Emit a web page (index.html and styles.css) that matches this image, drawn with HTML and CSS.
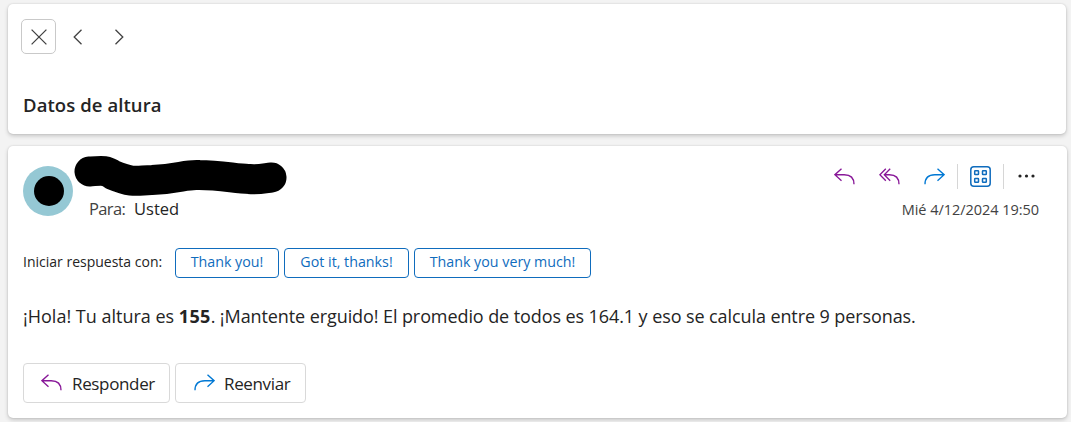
FILE: index.html
```
<!DOCTYPE html>
<html lang="es">
<head>
<meta charset="utf-8">
<title>Datos de altura</title>
<link rel="stylesheet" href="styles.css">
</head>
<body>
<header class="card subject-card">
  <nav class="nav">
    <button class="nav-btn close" aria-label="Cerrar"><svg width="16" height="16" viewBox="0 0 16 16"><path d="M.6.6 15.4 15.4M15.4.6.6 15.4"/></svg></button>
    <button class="nav-btn prev" aria-label="Anterior"><svg width="9" height="16" viewBox="0 0 9 16"><path d="M8.5.8 1.2 8l7.3 7.2"/></svg></button>
    <button class="nav-btn next" aria-label="Siguiente"><svg width="9" height="16" viewBox="0 0 9 16"><path d="M.5.8 7.8 8 .5 15.2"/></svg></button>
  </nav>
  <h1 class="subject"><span>Datos de altura</span></h1>
</header>
<main class="card message">
  <section class="message-head">
    <div class="avatar"><span class="avatar-dot"></span></div>
    <div class="sender">
      <svg class="redaction" width="214" height="41" viewBox="0 0 214 41"><path d="M15.500 16.500C29 15.500 32 15 39 20C61 29 64 25 78 25C104 24 112 19 125 20C148 20 162 24 175 24C185 25 192 23 197.500 22.500"/></svg>
      <p class="to"><span class="to-label">Para:</span><span class="to-name">Usted</span></p>
    </div>
    <div class="meta">
      <div class="actions">
        <svg class="ico purple first-action" width="21" height="17" viewBox="0 0 21 17"><path d="M7.500.8.9 6.700l6.600 6M1 6.700h9.200Q20 6.700 20 16.300"/></svg>
        <svg class="ico purple all" width="21" height="17" viewBox="0 0 21 17"><path d="M6.800.8.9 6.700l5.900 6M11.200.8 5.300 6.700l5.900 6M5.400 6.700h5Q20 6.700 20 16.300"/></svg>
        <svg class="ico blue fwd" width="21" height="17" viewBox="0 0 21 17"><path d="M13.500.8l6.600 5.900-6.600 6M20 6.700h-9.200Q1 6.700 1 16.300"/></svg>
        <span class="sep first"></span>
        <svg class="apps" width="21" height="21" viewBox="0 0 21 21"><rect x=".8" y=".8" width="19.400" height="19.400" rx="3"/><rect x="4.700" y="4.700" width="3.800" height="3.800" rx=".6"/><rect x="12.500" y="4.700" width="3.800" height="3.800" rx=".6"/><rect x="4.700" y="12.500" width="3.800" height="3.800" rx=".6"/><rect x="12.500" y="12.500" width="3.800" height="3.800" rx=".6"/></svg>
        <span class="sep second"></span>
        <svg class="more" width="17" height="4" viewBox="0 0 17 4"><circle cx="2" cy="2" r="1.600"/><circle cx="8.500" cy="2" r="1.600"/><circle cx="15" cy="2" r="1.600"/></svg>
      </div>
      <time class="date">Mié 4/12/2024 19:50</time>
    </div>
  </section>
  <section class="suggestions">
    <span class="suggest-label"><span>Iniciar respuesta con:</span></span>
    <button class="chip c1"><span>Thank you!</span></button>
    <button class="chip c2"><span>Got it, thanks!</span></button>
    <button class="chip c3"><span>Thank you very much!</span></button>
  </section>
  <p class="body-text"><span class="b1">¡Hola! Tu altura es </span><b>155</b><span class="b2">. ¡Mantente erguido! El promedio de todos es 164.1 y eso se calcula entre 9 personas.</span></p>
  <footer class="replies">
    <button class="reply r1"><svg class="ico purple" width="21" height="17" viewBox="0 0 21 17"><path d="M7.500.8.9 6.700l6.600 6M1 6.700h9.200Q20 6.700 20 16.300"/></svg><span>Responder</span></button>
    <button class="reply r2"><svg class="ico blue" width="21" height="17" viewBox="0 0 21 17"><path d="M13.500.8l6.600 5.900-6.600 6M20 6.700h-9.200Q1 6.700 1 16.300"/></svg><span>Reenviar</span></button>
  </footer>
</main>
</body>
</html>
```
FILE: styles.css
```
* { box-sizing: border-box; }
html, body { height: 100%; }
body {
  margin: 0;
  padding: 4px 0 0 8px;
  overflow: hidden;
  background: #f3f3f3;
  color: #242424;
  font-family: "Open Sans", "Noto Sans", sans-serif;
}
svg { display: block; flex: none; fill: none; }
button { font: inherit; background: #fff; padding: 0; }
h1, p { margin: 0; }
.card {
  background: #fff;
  border-radius: 5px;
  box-shadow: 0 0 2px rgba(0, 0, 0, .14), 0 2px 4px rgba(0, 0, 0, .18);
}
.subject-card { width: 1058px; height: 130px; padding: 15px 13px; }
.nav { display: flex; align-items: center; height: 35px; }
.nav-btn { display: flex; align-items: center; justify-content: center; border: 0; height: 35px; }
.nav-btn svg { stroke: #424242; stroke-width: 1.300; }
.close { width: 35px; border: 1px solid #c9c9c9; border-radius: 5px; }
.prev { margin-left: 17px; }
.next { margin-left: 33px; }
.subject { margin: 38px 0 0 2px; font-size: 18.500px; letter-spacing: .08px; line-height: 26px; font-weight: 600; white-space: nowrap; }
.message { width: 1059px; height: 272px; margin-top: 12px; padding: 9px 28px 0 15px; }
.message-head { display: flex; height: 93px; }
.avatar {
  width: 50px; height: 50px; margin-top: 11px; border-radius: 50%;
  display: flex; align-items: center; justify-content: center; background: #95c8d4;
}
.avatar-dot { width: 30px; height: 30px; margin-left: 1px; border-radius: 50%; background: #000; }
.sender { flex: 1; }
.redaction { margin-left: 1px; stroke: #000; stroke-width: 30; stroke-linecap: round; }
.to { display: flex; gap: 9px; margin: 1px 0 0 16px; font-size: 16.500px; line-height: 24px; }
.to-label { color: #424242; width: 36px; letter-spacing: -.65px; }
.meta { width: 206px; }
.actions { display: flex; align-items: center; height: 42px; }
.ico { stroke-width: 1.350; }
.purple { stroke: #881798; }
.blue { stroke: #0078d4; }
.actions .first-action { margin-left: 1px; }
.actions .all { margin-left: 24px; }
.actions .fwd { margin-left: 24px; }
.sep { width: 1px; height: 25px; background: #d6d6d6; }
.first { margin-left: 12px; }
.second { margin-left: 12px; }
.apps { margin-left: 12px; stroke: #0f6cbd; stroke-width: 1.500; }
.more { margin-left: 14px; fill: #242424; }
.date { display: block; padding-top: 1px; text-align: right; font-size: 14.500px; letter-spacing: -.04px; line-height: 24px; color: #424242; white-space: nowrap; }
.suggestions { display: flex; gap: 5px; height: 30px; font-size: 14px; line-height: 26px; }
.suggest-label { width: 147px; padding-top: 1px; white-space: nowrap; }
.chip { display: block; height: 30px; padding: 0 0 2px; border: 1px solid #0f6cbd; border-radius: 4px; color: #0f6cbd; font-size: 14.250px; white-space: nowrap; }
.c1 { width: 104px; }
.c2 { width: 125px; }
.c3 { width: 177px; }
.body-text { margin-top: 24px; font-size: 18px; line-height: 28px; white-space: pre; }
.body-text b { letter-spacing: .3px; }
.b2 { letter-spacing: -.09px; }
.replies { display: flex; gap: 5px; margin-top: 33px; }
.reply { display: flex; align-items: center; height: 40px; padding-left: 17px; border: 1px solid #d9d9d9; border-radius: 4px; color: #242424; font-size: 17px; letter-spacing: -.35px; }
.reply svg { margin-top: -1px; }
.reply span { margin-left: 10px; }
.r1 { width: 147px; }
.r2 { width: 131px; padding-left: 18px; }
.r2 span { margin-left: 9px; }
```
